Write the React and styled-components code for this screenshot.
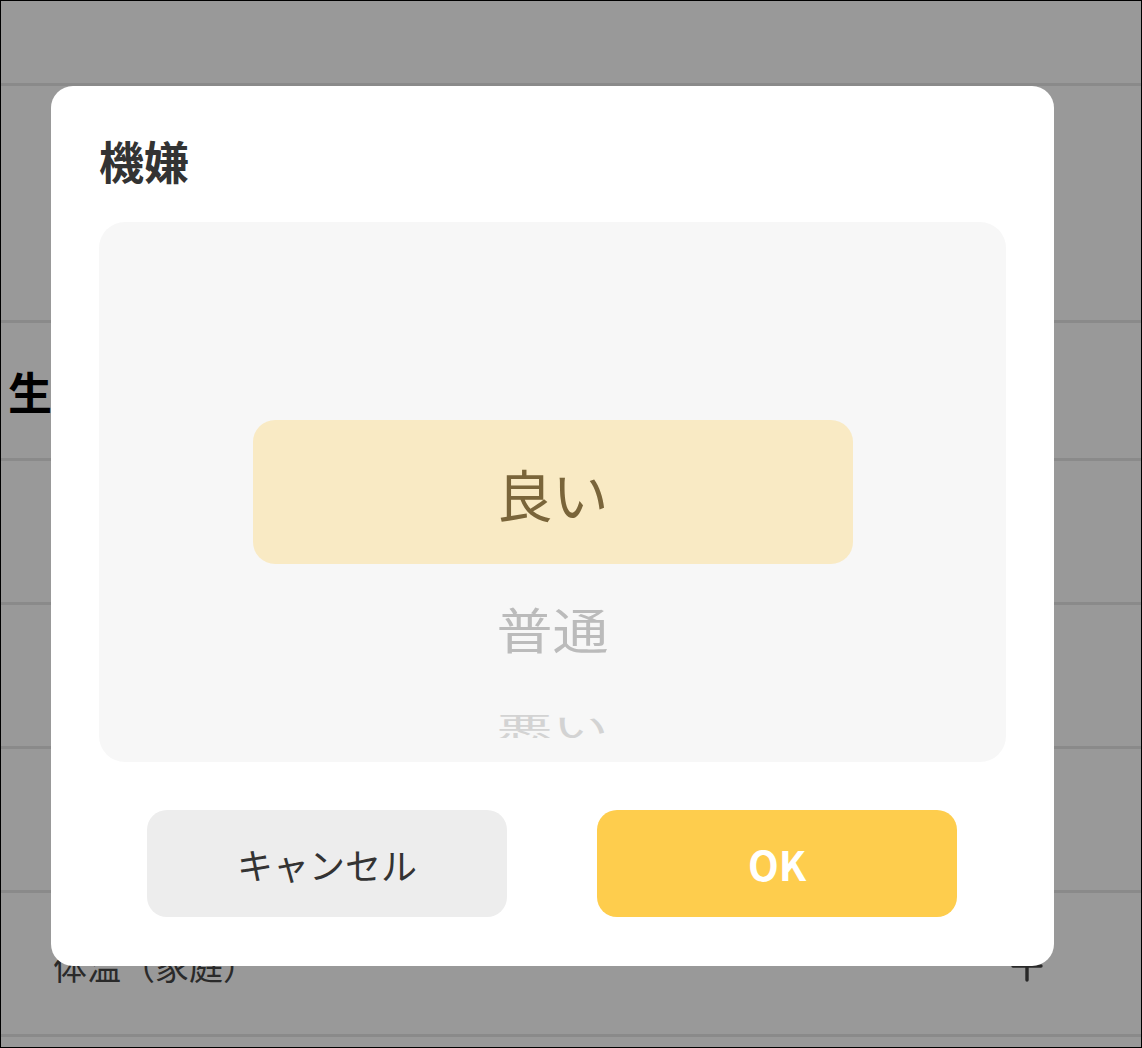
import React from "react";
import styled, { createGlobalStyle } from "styled-components";

const Global = createGlobalStyle`
  html, body { margin: 0; padding: 0; }
  body { font-family: "Noto Sans CJK JP", "Noto Sans", sans-serif; background: #fff; }
  * { box-sizing: border-box; }
`;

const Screen = styled.div`
  position: relative;
  width: 1142px;
  height: 1048px;
  overflow: hidden;
  border: 1px solid #000;
  background: #fff;
`;

const Page = styled.div`
  display: flex;
  flex-direction: column;
`;

const Header = styled.div`
  height: 85px;
  border-bottom: 3px solid #e6e6e6;
`;

const Block = styled.div`
  height: 237px;
  border-bottom: 3px solid #e6e6e6;
`;

const SectionHead = styled.div`
  height: 138px;
  display: flex;
  align-items: center;
  padding-left: 7px;
  border-bottom: 3px solid #e6e6e6;
  font-size: 44px;
  font-weight: 700;
  color: #000;
`;

const Row = styled.div`
  height: 144px;
  display: flex;
  align-items: center;
  justify-content: space-between;
  padding: 4px 98px 0 52px;
  border-bottom: 3px solid #e6e6e6;
  font-size: 34px;
  color: #464646;
`;

const Overlay = styled.div`
  position: absolute;
  inset: 0;
  background: rgba(0, 0, 0, 0.4);
  display: flex;
  align-items: flex-start;
  padding: 85px 0 0 50px;
`;

const Modal = styled.div`
  width: 1003px;
  height: 880px;
  background: #fff;
  border-radius: 22px;
  padding: 48px;
  display: flex;
  flex-direction: column;
`;

const Title = styled.h2`
  margin: 0 0 34px 0;
  height: 54px;
  line-height: 54px;
  font-size: 45px;
  font-weight: 700;
  color: #333;
`;

const Picker = styled.div`
  height: 540px;
  background: #f7f7f7;
  border-radius: 26px;
  padding: 24px 0;
  display: flex;
  flex-direction: column;
`;

const Wheel = styled.div`
  height: 492px;
  overflow: hidden;
  display: flex;
  flex-direction: column;
  align-items: center;
  padding-top: 174px;
`;

const Item = styled.div`
  flex: none;
  width: 600px;
  height: 144px;
  display: flex;
  align-items: center;
  justify-content: center;
  border-radius: 22px;
  font-size: 56px;
  font-weight: 400;
  background: ${(p) => (p.$selected ? "#f9eac4" : "transparent")};
  color: ${(p) => p.$color};
`;

const Buttons = styled.div`
  margin-top: 48px;
  display: flex;
  justify-content: flex-start;
  padding-left: 48px;
  gap: 90px;
`;

const Button = styled.button`
  width: 360px;
  height: 107px;
  border: none;
  border-radius: 20px;
  font-family: "Noto Sans CJK JP", "Noto Sans", sans-serif;
  font-size: ${(p) => (p.$primary ? "40px" : "36px")};
  font-weight: ${(p) => (p.$primary ? 700 : 400)};
  background: ${(p) => (p.$primary ? "#fecd4d" : "#ededed")};
  color: ${(p) => (p.$primary ? "#fff" : "#333")};
  padding: 0;
`;

const PlusIcon = () => (
  <svg width="32" height="32" viewBox="0 0 32 32" fill="none" stroke="#444" strokeWidth="3.4" strokeLinecap="round">
    <path d="M16 2v28M2 16h28" />
  </svg>
);

const options = ["良い", "普通", "悪い"];
const colors = ["#7a653a", "#bbbbbb", "#d3d3d3"];

export default function App() {
  const selected = 0;
  const R = 270;
  const step = (30 * Math.PI) / 180;
  return (
    <>
      <Global />
      <Screen>
        <Page>
          <Header />
          <Block />
          <SectionHead>生活記録</SectionHead>
          <Row>機嫌</Row>
          <Row>食事</Row>
          <Row>睡眠</Row>
          <Row>
            <span>体温（家庭）</span>
            <PlusIcon />
          </Row>
        </Page>
        <Overlay>
          <Modal>
            <Title>機嫌</Title>
            <Picker>
              <Wheel>
                {options.map((o, i) => {
                  const k = i - selected;
                  const a = k * step;
                  const dy = R * Math.sin(a) - k * 144;
                  const sy = Math.cos(a);
                  return (
                    <Item
                      key={o}
                      $selected={k === 0}
                      $color={colors[Math.abs(k)]}
                      style={{ transform: `translateY(${dy}px) scaleY(${sy})` }}
                    >
                      {o}
                    </Item>
                  );
                })}
              </Wheel>
            </Picker>
            <Buttons>
              <Button>キャンセル</Button>
              <Button $primary>OK</Button>
            </Buttons>
          </Modal>
        </Overlay>
      </Screen>
    </>
  );
}
